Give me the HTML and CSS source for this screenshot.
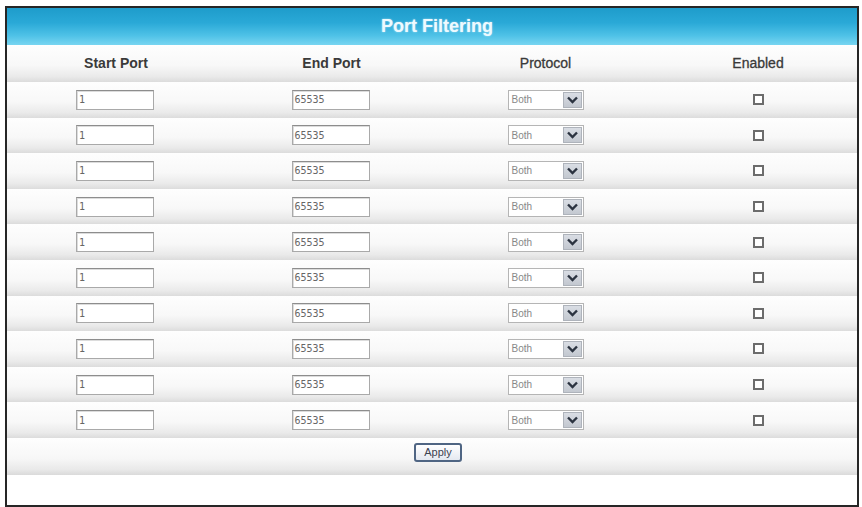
FILE: index.html
```html
<!DOCTYPE html>
<html>
<head>
<meta charset="utf-8">
<link rel="stylesheet" href="styles.css">
</head>
<body>
<div class="frame">
  <div class="title">Port Filtering</div>
  <div class="row head">
    <div class="cell">Start Port</div>
    <div class="cell">End Port</div>
    <div class="cell">Protocol</div>
    <div class="cell">Enabled</div>
  </div>
  <div class="rows">
    <div class="row"><div class="cell"><span class="inp">1</span></div><div class="cell"><span class="inp">65535</span></div><div class="cell"><span class="sel"><span class="sel-text">Both</span><span class="sel-btn"><svg width="11" height="8" viewBox="0 0 11 8"><path d="M1 1.5 L5.5 6 L10 1.5" fill="none" stroke="#2b3340" stroke-width="2.4"/></svg></span></span></div><div class="cell"><span class="chk"></span></div></div>
    <div class="row"><div class="cell"><span class="inp">1</span></div><div class="cell"><span class="inp">65535</span></div><div class="cell"><span class="sel"><span class="sel-text">Both</span><span class="sel-btn"><svg width="11" height="8" viewBox="0 0 11 8"><path d="M1 1.5 L5.5 6 L10 1.5" fill="none" stroke="#2b3340" stroke-width="2.4"/></svg></span></span></div><div class="cell"><span class="chk"></span></div></div>
    <div class="row"><div class="cell"><span class="inp">1</span></div><div class="cell"><span class="inp">65535</span></div><div class="cell"><span class="sel"><span class="sel-text">Both</span><span class="sel-btn"><svg width="11" height="8" viewBox="0 0 11 8"><path d="M1 1.5 L5.5 6 L10 1.5" fill="none" stroke="#2b3340" stroke-width="2.4"/></svg></span></span></div><div class="cell"><span class="chk"></span></div></div>
    <div class="row"><div class="cell"><span class="inp">1</span></div><div class="cell"><span class="inp">65535</span></div><div class="cell"><span class="sel"><span class="sel-text">Both</span><span class="sel-btn"><svg width="11" height="8" viewBox="0 0 11 8"><path d="M1 1.5 L5.5 6 L10 1.5" fill="none" stroke="#2b3340" stroke-width="2.4"/></svg></span></span></div><div class="cell"><span class="chk"></span></div></div>
    <div class="row"><div class="cell"><span class="inp">1</span></div><div class="cell"><span class="inp">65535</span></div><div class="cell"><span class="sel"><span class="sel-text">Both</span><span class="sel-btn"><svg width="11" height="8" viewBox="0 0 11 8"><path d="M1 1.5 L5.5 6 L10 1.5" fill="none" stroke="#2b3340" stroke-width="2.4"/></svg></span></span></div><div class="cell"><span class="chk"></span></div></div>
    <div class="row"><div class="cell"><span class="inp">1</span></div><div class="cell"><span class="inp">65535</span></div><div class="cell"><span class="sel"><span class="sel-text">Both</span><span class="sel-btn"><svg width="11" height="8" viewBox="0 0 11 8"><path d="M1 1.5 L5.5 6 L10 1.5" fill="none" stroke="#2b3340" stroke-width="2.4"/></svg></span></span></div><div class="cell"><span class="chk"></span></div></div>
    <div class="row"><div class="cell"><span class="inp">1</span></div><div class="cell"><span class="inp">65535</span></div><div class="cell"><span class="sel"><span class="sel-text">Both</span><span class="sel-btn"><svg width="11" height="8" viewBox="0 0 11 8"><path d="M1 1.5 L5.5 6 L10 1.5" fill="none" stroke="#2b3340" stroke-width="2.4"/></svg></span></span></div><div class="cell"><span class="chk"></span></div></div>
    <div class="row"><div class="cell"><span class="inp">1</span></div><div class="cell"><span class="inp">65535</span></div><div class="cell"><span class="sel"><span class="sel-text">Both</span><span class="sel-btn"><svg width="11" height="8" viewBox="0 0 11 8"><path d="M1 1.5 L5.5 6 L10 1.5" fill="none" stroke="#2b3340" stroke-width="2.4"/></svg></span></span></div><div class="cell"><span class="chk"></span></div></div>
    <div class="row"><div class="cell"><span class="inp">1</span></div><div class="cell"><span class="inp">65535</span></div><div class="cell"><span class="sel"><span class="sel-text">Both</span><span class="sel-btn"><svg width="11" height="8" viewBox="0 0 11 8"><path d="M1 1.5 L5.5 6 L10 1.5" fill="none" stroke="#2b3340" stroke-width="2.4"/></svg></span></span></div><div class="cell"><span class="chk"></span></div></div>
    <div class="row"><div class="cell"><span class="inp">1</span></div><div class="cell"><span class="inp">65535</span></div><div class="cell"><span class="sel"><span class="sel-text">Both</span><span class="sel-btn"><svg width="11" height="8" viewBox="0 0 11 8"><path d="M1 1.5 L5.5 6 L10 1.5" fill="none" stroke="#2b3340" stroke-width="2.4"/></svg></span></span></div><div class="cell"><span class="chk"></span></div></div>
  </div>
  <div class="apply-row"><span class="btn">Apply</span></div>
</div>
</body>
</html>
```
FILE: styles.css
```css
html, body {
  margin: 0;
  padding: 0;
  background: #ffffff;
}
body {
  padding: 6px 0 0 5px;
  font-family: "Liberation Sans", Arial, sans-serif;
}
.frame {
  width: 850px;
  height: 497px;
  border: 2px solid #262626;
  background: #ffffff;
  display: flex;
  flex-direction: column;
}
.title {
  height: 37px;
  background: linear-gradient(#1e9ccb 0%, #2aa9d7 40%, #4fc2e7 75%, #78d5f1 100%);
  color: #eefaff;
  font-weight: bold;
  font-size: 18px;
  display: flex;
  align-items: center;
  justify-content: center;
  padding-left: 10px;
  box-sizing: border-box;
  text-shadow: 0 0 2px rgba(255,255,255,0.6);
}
.row {
  display: grid;
  grid-template-columns: 216px 215px 215px 1fr;
  height: 35.6px;
  background: linear-gradient(#fefefe 0%, #f8f8f8 55%, #eaeaea 85%, #dcdcdc 100%);
}
.row.head {
  height: 37px;
  padding-bottom: 2px;
  box-sizing: border-box;
  font-weight: bold;
  font-size: 14px;
  color: #3a3a3a;
}
.cell {
  display: flex;
  align-items: center;
  justify-content: center;
}
.head .cell:nth-child(1) { padding-left: 2px; }
.head .cell:nth-child(2) { padding-left: 2px; }
.head .cell:nth-child(3) { font-weight: normal; -webkit-text-stroke: 0.3px #3a3a3a; }
.head .cell:nth-child(4) { font-weight: normal; -webkit-text-stroke: 0.3px #3a3a3a; padding-left: 6px; }
.inp {
  box-sizing: border-box;
  width: 78px;
  height: 20px;
  border: 1px solid #a9a9a9;
  border-top-color: #8d8d8d;
  background: #ffffff;
  font-family: "DejaVu Sans Mono", monospace;
  font-size: 10px;
  color: #666;
  display: flex;
  align-items: center;
  padding-left: 2px;
  box-shadow: inset 1px 1px 0 #dcdcdc;
}
.sel {
  box-sizing: border-box;
  width: 76px;
  height: 20px;
  border: 1px solid #b5b5b5;
  background: #ffffff;
  display: flex;
  align-items: stretch;
}
.sel-text {
  flex: 1;
  font-size: 10px;
  color: #888;
  display: flex;
  align-items: center;
  padding-left: 3px;
}
.sel-btn {
  width: 17px;
  margin: 1px;
  background: linear-gradient(#d9dde4, #c3c8d0);
  border: 1px solid #aeb3bb;
  display: flex;
  align-items: center;
  justify-content: center;
}
.chk {
  box-sizing: border-box;
  width: 11px;
  height: 11px;
  border: 2px solid #6c6c6c;
  background: #fff;
  margin-left: 6px;
}
.apply-row {
  height: 37px;
  display: flex;
  align-items: flex-start;
  justify-content: center;
  background: linear-gradient(#fefefe 0%, #f7f7f7 55%, #e9e9e9 85%, #dadada 100%);
  padding-left: 12px;
  padding-top: 5px;
  box-sizing: border-box;
}
.btn {
  box-sizing: border-box;
  width: 48px;
  height: 19px;
  border: 2px solid #4f6583;
  border-radius: 3px;
  background: linear-gradient(#ffffff, #e4e8f0);
  font-size: 11px;
  color: #3b4250;
  display: flex;
  align-items: center;
  justify-content: center;
}
```
